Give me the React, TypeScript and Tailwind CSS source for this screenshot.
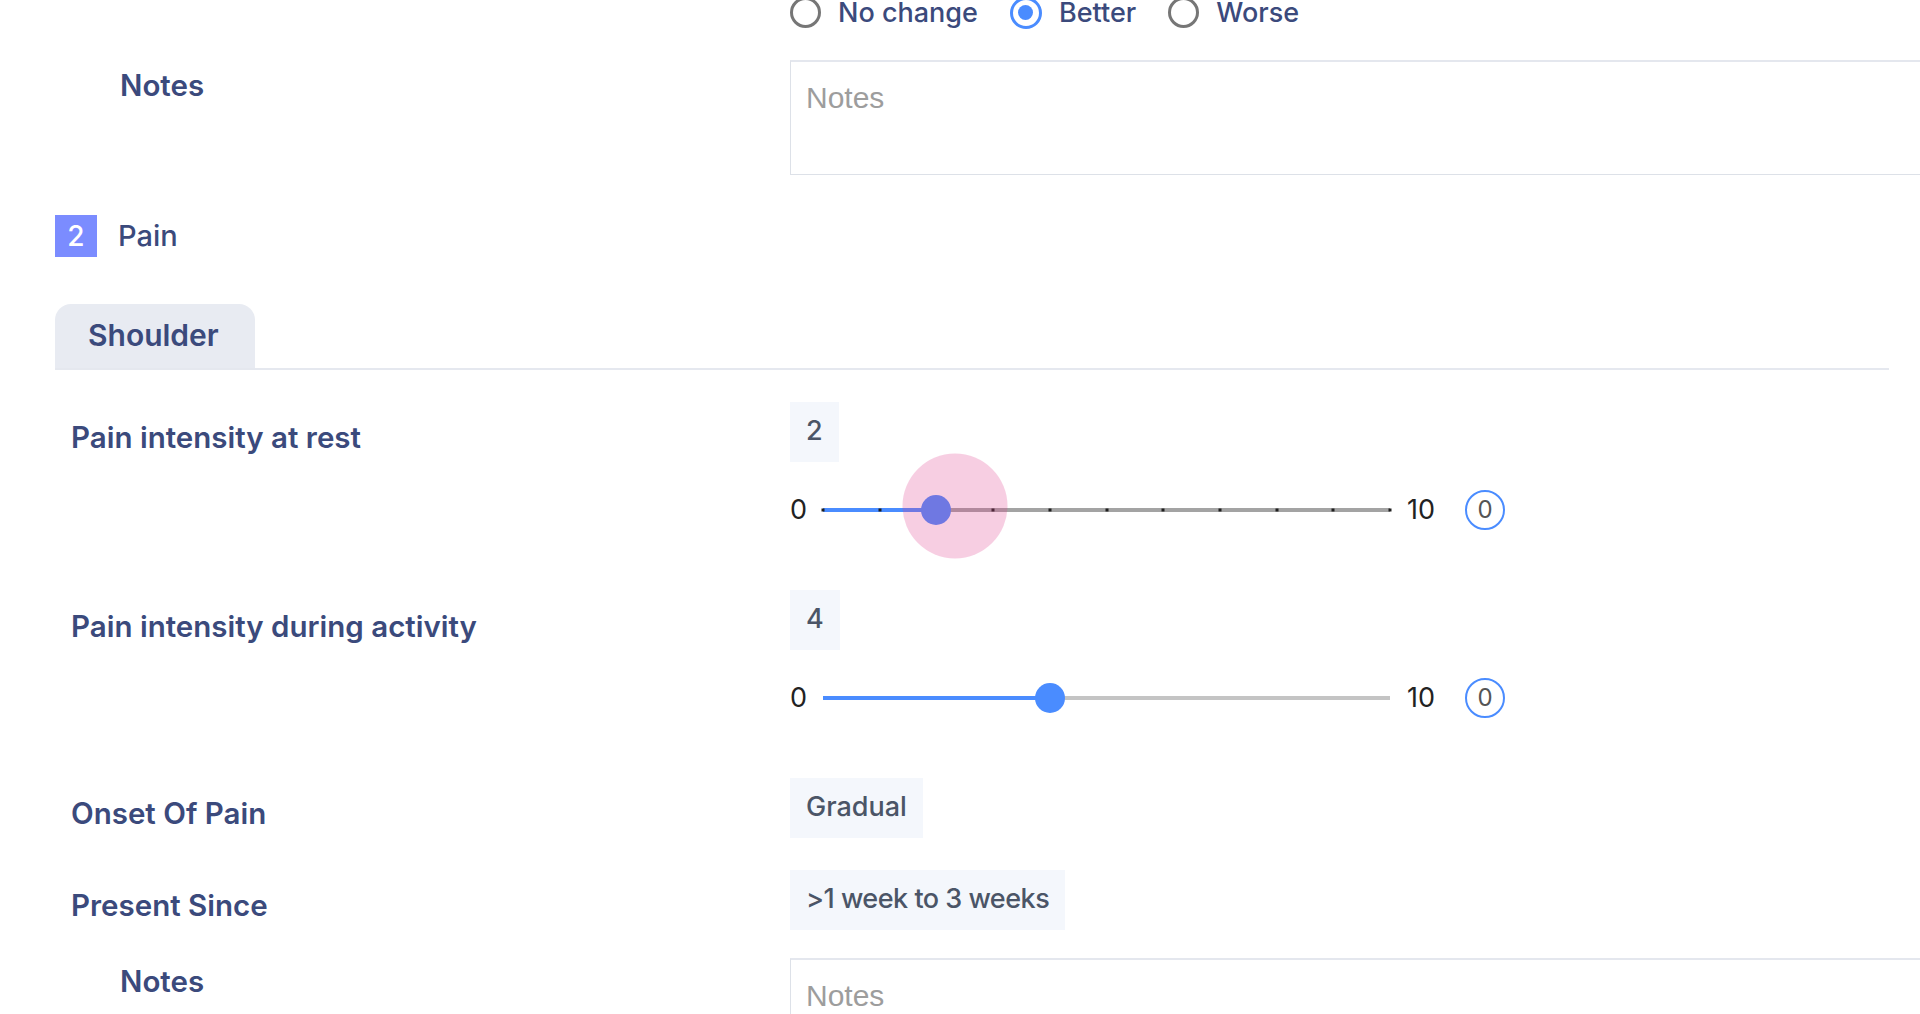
import React from "react";

const LABEL = "#3b4a7c";

function Radio({ label, checked }: { label: string; checked?: boolean }) {
  return (
    <div className="flex items-center gap-[17px]">
      {checked ? (
        <div className="w-[32px] h-[32px] rounded-full border-[3px] border-[#4a8cff] flex items-center justify-center">
          <div className="w-[15px] h-[15px] rounded-full bg-[#4a8cff]" />
        </div>
      ) : (
        <div className="w-[31px] h-[31px] rounded-full border-[3px] border-[#767676]" />
      )}
      <span className="text-[27px] leading-[24px] font-medium text-[#3b4a7c] whitespace-nowrap">{label}</span>
    </div>
  );
}

function NotesBox() {
  return (
    <textarea
      placeholder="Notes"
      className="block w-[1250px] h-[115px] resize-none border border-[#dde1e8] border-t-2 border-t-[#e4e7ee] bg-white pl-[15px] pt-[13px] text-[30px] font-['Liberation_Sans',Arial,sans-serif] placeholder:text-[#9d9d9d] outline-none"
    />
  );
}

function ValueBox({ children, tight }: { children: React.ReactNode; tight?: boolean }) {
  return (
    <div
      className={`inline-flex items-center h-[60px] px-[16px] bg-[#f4f7fc] text-[27px] font-medium text-[#4b5567] whitespace-nowrap ${
        tight ? "tracking-[-0.5px]" : ""
      }`}
    >
      {children}
    </div>
  );
}

function Slider({ value, active }: { value: number; active?: boolean }) {
  const pct = (value / 10) * 100;
  const ticks = Array.from({ length: 11 }, (_, i) => i);
  return (
    <div className="flex items-center h-[40px] mt-[28px]">
      <span className="w-[33px] text-[27px] text-[#222222] leading-none">0</span>
      <div className={`relative w-[567px] h-[4px] ${active ? "bg-[#a3a3a3]" : "bg-[#c4c4c4]"}`}>
        <div className="absolute left-0 top-0 h-full bg-[#4a8cff]" style={{ width: `${pct}%` }} />
        {active &&
          ticks.map((i) => (
            <div
              key={i}
              className="absolute top-1/2 w-[3px] h-[3px] -translate-x-1/2 -translate-y-1/2 bg-[#1f1f1f]"
              style={{ left: `${i * 10}%` }}
            />
          ))}
        <div
          className="absolute top-1/2 w-[30px] h-[30px] rounded-full -translate-x-1/2 -translate-y-1/2 bg-[#4a8cff]"
          style={{ left: `${pct}%` }}
        />
        {active && (
          <div
            className="absolute top-1/2 w-[105px] h-[105px] rounded-full bg-[rgba(225,60,140,0.25)] pointer-events-none"
            style={{ left: `calc(${pct}% + 19px)`, transform: "translate(-50%, calc(-50% - 4px))" }}
          />
        )}
      </div>
      <span className="ml-[17px] w-[26px] text-[27px] text-[#222222] leading-none whitespace-nowrap">10</span>
      <div className="ml-[32px] w-[40px] h-[40px] rounded-full border-2 border-[#4a8cff] flex items-center justify-center text-[24px] text-[#555555]">
        0
      </div>
    </div>
  );
}

function FieldLabel({ children, pt }: { children: React.ReactNode; pt: string }) {
  return <div className={`pl-[16px] text-[29.5px] font-semibold text-[#3b4a7c] ${pt}`}>{children}</div>;
}

export default function App() {
  return (
    <div className="w-full h-screen overflow-hidden bg-white font-['Inter',sans-serif]" style={{ color: LABEL }}>
      <div className="pl-[55px] pr-[31px] -mt-[3px]">
        {/* radio row */}
        <div className="grid grid-cols-[735px_1fr]">
          <div />
          <div className="flex items-center h-[31px] gap-[32px]">
            <Radio label="No change" />
            <Radio label="Better" checked />
            <Radio label="Worse" />
          </div>
        </div>

        {/* notes */}
        <div className="grid grid-cols-[735px_1fr] mt-[32px]">
          <div className="pl-[65px] pt-[3px] text-[29.5px] font-semibold text-[#3b4a7c]">Notes</div>
          <NotesBox />
        </div>

        {/* Pain header */}
        <div className="flex items-center mt-[39px] gap-[21px]">
          <div className="w-[42px] h-[42px] bg-[#7b8cff] text-white text-[28px] font-medium flex items-center justify-center">
            2
          </div>
          <span className="text-[29px] font-medium text-[#3b4a7c]">Pain</span>
        </div>

        {/* Tab */}
        <div className="mt-[46px] border-b-2 border-[#e5e8ef] flex">
          <div className="w-[200px] h-[64px] rounded-t-[16px] bg-[#e8ebf2] flex items-center pl-[33px] text-[30px] font-semibold text-[#3b4a7c]">
            Shoulder
          </div>
        </div>

        {/* Pain at rest */}
        <div className="grid grid-cols-[735px_1fr] mt-[32px]">
          <FieldLabel pt="pt-[13px]">Pain intensity at rest</FieldLabel>
          <div className="flex flex-col items-start">
            <ValueBox>2</ValueBox>
            <Slider value={2} active />
          </div>
        </div>

        {/* Pain during activity */}
        <div className="grid grid-cols-[735px_1fr] mt-[60px]">
          <FieldLabel pt="pt-[14px]">Pain intensity during activity</FieldLabel>
          <div className="flex flex-col items-start">
            <ValueBox>4</ValueBox>
            <Slider value={4} />
          </div>
        </div>

        {/* Onset */}
        <div className="grid grid-cols-[735px_1fr] mt-[60px]">
          <FieldLabel pt="pt-[13px]">Onset Of Pain</FieldLabel>
          <div className="flex flex-col items-start">
            <ValueBox>Gradual</ValueBox>
          </div>
        </div>

        {/* Present since */}
        <div className="grid grid-cols-[735px_1fr] mt-[32px]">
          <FieldLabel pt="pt-[13px]">Present Since</FieldLabel>
          <div className="flex flex-col items-start">
            <ValueBox tight>&gt;1 week to 3 weeks</ValueBox>
          </div>
        </div>

        {/* Notes */}
        <div className="grid grid-cols-[735px_1fr] mt-[28px]">
          <div className="pl-[65px] pt-[1px] text-[29.5px] font-semibold text-[#3b4a7c]">Notes</div>
          <NotesBox />
        </div>
      </div>
    </div>
  );
}
